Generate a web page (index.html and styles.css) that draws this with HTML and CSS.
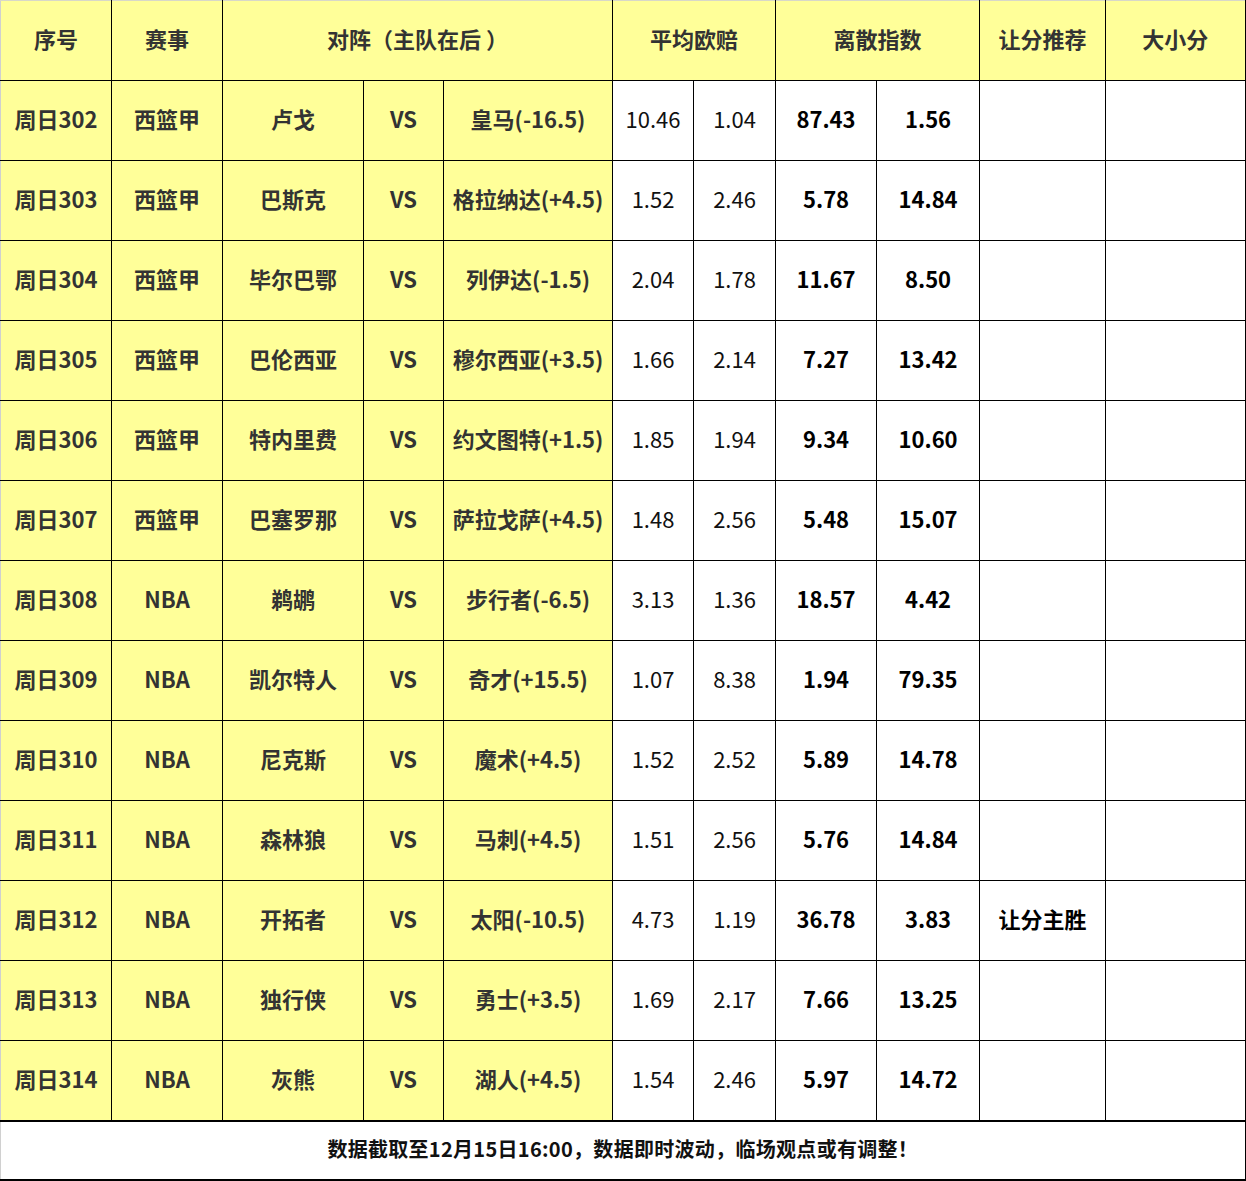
FILE: index.html
```html
<!DOCTYPE html>
<html lang="zh">
<head>
<meta charset="utf-8">
<link rel="stylesheet" href="styles.css">
</head>
<body>
<table class="grid">
<colgroup>
<col class="c1"><col class="c2"><col class="c3"><col class="c4"><col class="c5"><col class="c6"><col class="c7"><col class="c8"><col class="c9"><col class="c10"><col class="c11">
</colgroup>
<thead>
<tr class="head">
<th>序号</th><th>赛事</th><th colspan="3">对阵（主队在后 ）</th><th colspan="2">平均欧赔</th><th colspan="2">离散指数</th><th>让分推荐</th><th>大小分</th>
</tr>
</thead>
<tbody>
<tr><td class="y">周日302</td><td class="y">西篮甲</td><td class="y">卢戈</td><td class="y">VS</td><td class="y">皇马(-16.5)</td><td class="n">10.46</td><td class="n">1.04</td><td class="b">87.43</td><td class="b">1.56</td><td class="b"></td><td class="b"></td></tr>
<tr><td class="y">周日303</td><td class="y">西篮甲</td><td class="y">巴斯克</td><td class="y">VS</td><td class="y">格拉纳达(+4.5)</td><td class="n">1.52</td><td class="n">2.46</td><td class="b">5.78</td><td class="b">14.84</td><td class="b"></td><td class="b"></td></tr>
<tr><td class="y">周日304</td><td class="y">西篮甲</td><td class="y">毕尔巴鄂</td><td class="y">VS</td><td class="y">列伊达(-1.5)</td><td class="n">2.04</td><td class="n">1.78</td><td class="b">11.67</td><td class="b">8.50</td><td class="b"></td><td class="b"></td></tr>
<tr><td class="y">周日305</td><td class="y">西篮甲</td><td class="y">巴伦西亚</td><td class="y">VS</td><td class="y">穆尔西亚(+3.5)</td><td class="n">1.66</td><td class="n">2.14</td><td class="b">7.27</td><td class="b">13.42</td><td class="b"></td><td class="b"></td></tr>
<tr><td class="y">周日306</td><td class="y">西篮甲</td><td class="y">特内里费</td><td class="y">VS</td><td class="y">约文图特(+1.5)</td><td class="n">1.85</td><td class="n">1.94</td><td class="b">9.34</td><td class="b">10.60</td><td class="b"></td><td class="b"></td></tr>
<tr><td class="y">周日307</td><td class="y">西篮甲</td><td class="y">巴塞罗那</td><td class="y">VS</td><td class="y">萨拉戈萨(+4.5)</td><td class="n">1.48</td><td class="n">2.56</td><td class="b">5.48</td><td class="b">15.07</td><td class="b"></td><td class="b"></td></tr>
<tr><td class="y">周日308</td><td class="y">NBA</td><td class="y">鹈鹕</td><td class="y">VS</td><td class="y">步行者(-6.5)</td><td class="n">3.13</td><td class="n">1.36</td><td class="b">18.57</td><td class="b">4.42</td><td class="b"></td><td class="b"></td></tr>
<tr><td class="y">周日309</td><td class="y">NBA</td><td class="y">凯尔特人</td><td class="y">VS</td><td class="y">奇才(+15.5)</td><td class="n">1.07</td><td class="n">8.38</td><td class="b">1.94</td><td class="b">79.35</td><td class="b"></td><td class="b"></td></tr>
<tr><td class="y">周日310</td><td class="y">NBA</td><td class="y">尼克斯</td><td class="y">VS</td><td class="y">魔术(+4.5)</td><td class="n">1.52</td><td class="n">2.52</td><td class="b">5.89</td><td class="b">14.78</td><td class="b"></td><td class="b"></td></tr>
<tr><td class="y">周日311</td><td class="y">NBA</td><td class="y">森林狼</td><td class="y">VS</td><td class="y">马刺(+4.5)</td><td class="n">1.51</td><td class="n">2.56</td><td class="b">5.76</td><td class="b">14.84</td><td class="b"></td><td class="b"></td></tr>
<tr><td class="y">周日312</td><td class="y">NBA</td><td class="y">开拓者</td><td class="y">VS</td><td class="y">太阳(-10.5)</td><td class="n">4.73</td><td class="n">1.19</td><td class="b">36.78</td><td class="b">3.83</td><td class="b">让分主胜</td><td class="b"></td></tr>
<tr><td class="y">周日313</td><td class="y">NBA</td><td class="y">独行侠</td><td class="y">VS</td><td class="y">勇士(+3.5)</td><td class="n">1.69</td><td class="n">2.17</td><td class="b">7.66</td><td class="b">13.25</td><td class="b"></td><td class="b"></td></tr>
<tr><td class="y">周日314</td><td class="y">NBA</td><td class="y">灰熊</td><td class="y">VS</td><td class="y">湖人(+4.5)</td><td class="n">1.54</td><td class="n">2.46</td><td class="b">5.97</td><td class="b">14.72</td><td class="b"></td><td class="b"></td></tr>
</tbody>
<tfoot>
<tr class="foot"><td colspan="11">数据截取至12月15日16:00，数据即时波动，临场观点或有调整！</td></tr>
</tfoot>
</table>
</body>
</html>
```
FILE: styles.css
```css
html, body {
  margin: 0;
  padding: 0;
  background: #ffffff;
}
body {
  font-family: "Noto Sans CJK SC", "Noto Sans", sans-serif;
}
.grid {
  border-collapse: collapse;
  table-layout: fixed;
  width: 1245px;
  border-top: 1px solid #d8d8c8;
  border-left: 1px solid #d0d0d0;
}
.c1 { width: 111px; }
.c2 { width: 111px; }
.c3 { width: 141px; }
.c4 { width: 80px; }
.c5 { width: 169px; }
.c6 { width: 81px; }
.c7 { width: 82px; }
.c8 { width: 101px; }
.c9 { width: 103px; }
.c10 { width: 126px; }
.c11 { width: 140px; }
.grid th, .grid td {
  border: 1px solid #000;
  text-align: center;
  vertical-align: middle;
  padding: 0 0 6px 0;
  height: 73px;
  white-space: nowrap;
  font-size: 22px;
  line-height: 1;
}
.grid th:first-child, .grid td:first-child {
  border-left: 1px solid #d0d0d0;
}
.grid thead th {
  border-top: 1px solid #d8d8c8;
}
.grid th:last-child, .grid td:last-child {
  border-right: 2px solid #000;
}
.head th {
  background: #ffff99;
  color: #333;
  font-weight: 700;
}
.y {
  background: #ffff99;
  color: #333;
  font-weight: 700;
}
.n {
  background: #fff;
  color: #111;
  font-weight: 400;
  font-size: 22.5px;
}
.b {
  background: #fff;
  color: #000;
  font-weight: 700;
}
.foot td {
  height: 54px;
  padding-bottom: 3px;
  border-top: 2px solid #000;
  border-bottom: 2px solid #000;
  font-size: 20px;
  letter-spacing: 0.3px;
  font-weight: 700;
  color: #111;
}
```
